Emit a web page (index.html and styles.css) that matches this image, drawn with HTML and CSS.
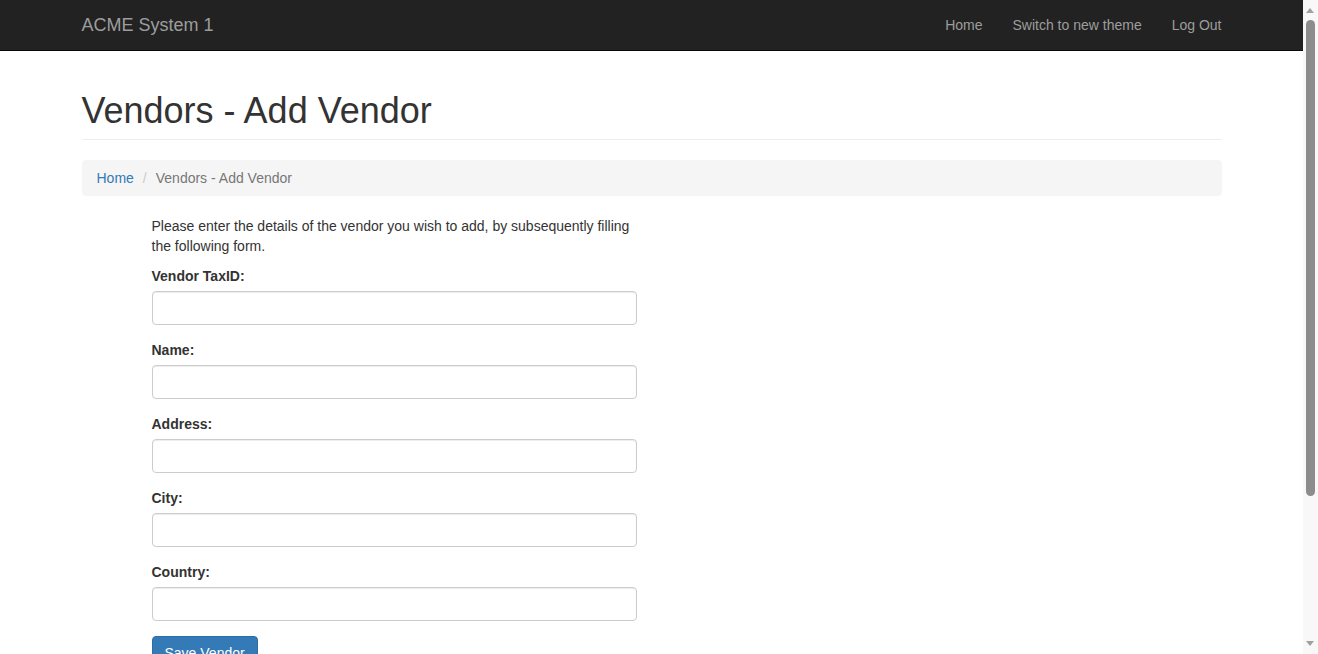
FILE: index.html
```html
<!DOCTYPE html>
<html>
<head>
<meta charset="utf-8">
<title>Vendors - Add Vendor</title>
<link rel="stylesheet" href="styles.css">
</head>
<body>
<nav class="navbar">
  <div class="container navbar-inner">
    <a class="brand" href="#">ACME System 1</a>
    <ul class="nav">
      <li><a href="#">Home</a></li>
      <li><a href="#">Switch to new theme</a></li>
      <li><a href="#">Log Out</a></li>
    </ul>
  </div>
</nav>
<div class="container body-content">
  <div class="page-header">
    <h1>Vendors - Add Vendor</h1>
  </div>
  <ol class="breadcrumb">
    <li><a href="#">Home</a></li>
    <li class="sep">/</li>
    <li class="active">Vendors - Add Vendor</li>
  </ol>
  <form class="vendor-form">
    <p class="intro">Please enter the details of the vendor you wish to add, by subsequently filling the following form.</p>
    <div class="form-group">
      <label for="taxid">Vendor TaxID:</label>
      <input id="taxid" class="form-control" type="text">
    </div>
    <div class="form-group">
      <label for="name">Name:</label>
      <input id="name" class="form-control" type="text">
    </div>
    <div class="form-group">
      <label for="address">Address:</label>
      <input id="address" class="form-control" type="text">
    </div>
    <div class="form-group">
      <label for="city">City:</label>
      <input id="city" class="form-control" type="text">
    </div>
    <div class="form-group">
      <label for="country">Country:</label>
      <input id="country" class="form-control" type="text">
    </div>
    <button type="button" class="btn-primary">Save Vendor</button>
  </form>
  <hr>
  <footer class="footer">
    <p>&copy; 2017 - ACME System 1</p>
  </footer>
</div>
<div class="scrollbar" aria-hidden="true">
  <span class="sb-arrow sb-up"></span>
  <span class="sb-thumb"></span>
  <span class="sb-arrow sb-down"></span>
</div>
</body>
</html>
```

FILE: styles.css
```css
* { box-sizing: border-box; }
html, body { margin: 0; padding: 0; }
body {
  margin-right: 15px;
  font-family: "Liberation Sans", Arial, Helvetica, sans-serif;
  font-size: 14px;
  line-height: 20px;
  color: #333;
  background: #fff;
}
a { color: #337ab7; text-decoration: none; }
.container {
  width: 1170px;
  margin: 0 auto;
  padding: 0 15px;
}
.navbar {
  background: #222;
  border-bottom: 1px solid #080808;
  height: 51px;
}
.navbar-inner {
  display: flex;
  justify-content: space-between;
  align-items: stretch;
  height: 50px;
}
.brand {
  font-size: 18px;
  line-height: 20px;
  padding: 15px 0;
  color: #9d9d9d;
}
.nav {
  display: flex;
  list-style: none;
  margin: 0 -15px 0 0;
  padding: 0;
}
.nav a {
  display: block;
  padding: 15px;
  line-height: 20px;
  color: #9d9d9d;
}
.page-header {
  margin-top: 40px;
  padding-bottom: 8px;
  border-bottom: 1px solid #eee;
}
.page-header h1 {
  margin: 0;
  font-size: 36px;
  font-weight: 500;
  line-height: 39.6px;
}
.breadcrumb {
  display: flex;
  list-style: none;
  margin: 20px 0 20px;
  padding: 8px 15px;
  background: #f5f5f5;
  border-radius: 4px;
}
.breadcrumb .sep { color: #ccc; padding: 0 5px 0 9px; }
.breadcrumb .active { color: #777; padding-left: 4px; }
.vendor-form {
  margin-left: 70px;
  width: 485px;
}
.intro { margin: 0 0 10px; padding-right: 5px; }
.form-group { margin-bottom: 15px; }
.form-group label {
  display: block;
  font-weight: bold;
  margin-bottom: 5px;
}
.form-control {
  display: block;
  width: 100%;
  height: 34px;
  padding: 6px 12px;
  font: inherit;
  color: #555;
  background: #fff;
  border: 1px solid #ccc;
  border-radius: 4px;
  box-shadow: inset 0 1px 1px rgba(0,0,0,.075);
}
.btn-primary {
  display: inline-block;
  height: 34px;
  padding: 6px 12px;
  font: inherit;
  color: #fff;
  background: #337ab7;
  border: 1px solid #2e6da4;
  border-radius: 4px;
}
hr {
  margin: 20px 0;
  border: 0;
  border-top: 1px solid #eee;
}
.footer { padding-bottom: 122px; }
.footer p { margin: 0 0 10px; }

/* window scrollbar, drawn over the right edge */
.scrollbar {
  position: fixed;
  top: 0;
  right: 0;
  width: 15px;
  height: 100%;
  background: #f8f8f8;
}
.sb-thumb {
  position: absolute;
  left: 3px;
  top: 20px;
  width: 9px;
  height: 476px;
  border-radius: 5px;
  background: #8c8c8c;
}
.sb-arrow {
  position: absolute;
  left: 3px;
  width: 0;
  height: 0;
  border-left: 4.5px solid transparent;
  border-right: 4.5px solid transparent;
}
.sb-up {
  top: 8px;
  border-bottom: 5px solid #a0a0a0;
}
.sb-down {
  bottom: 8px;
  border-top: 5px solid #a0a0a0;
}
```
